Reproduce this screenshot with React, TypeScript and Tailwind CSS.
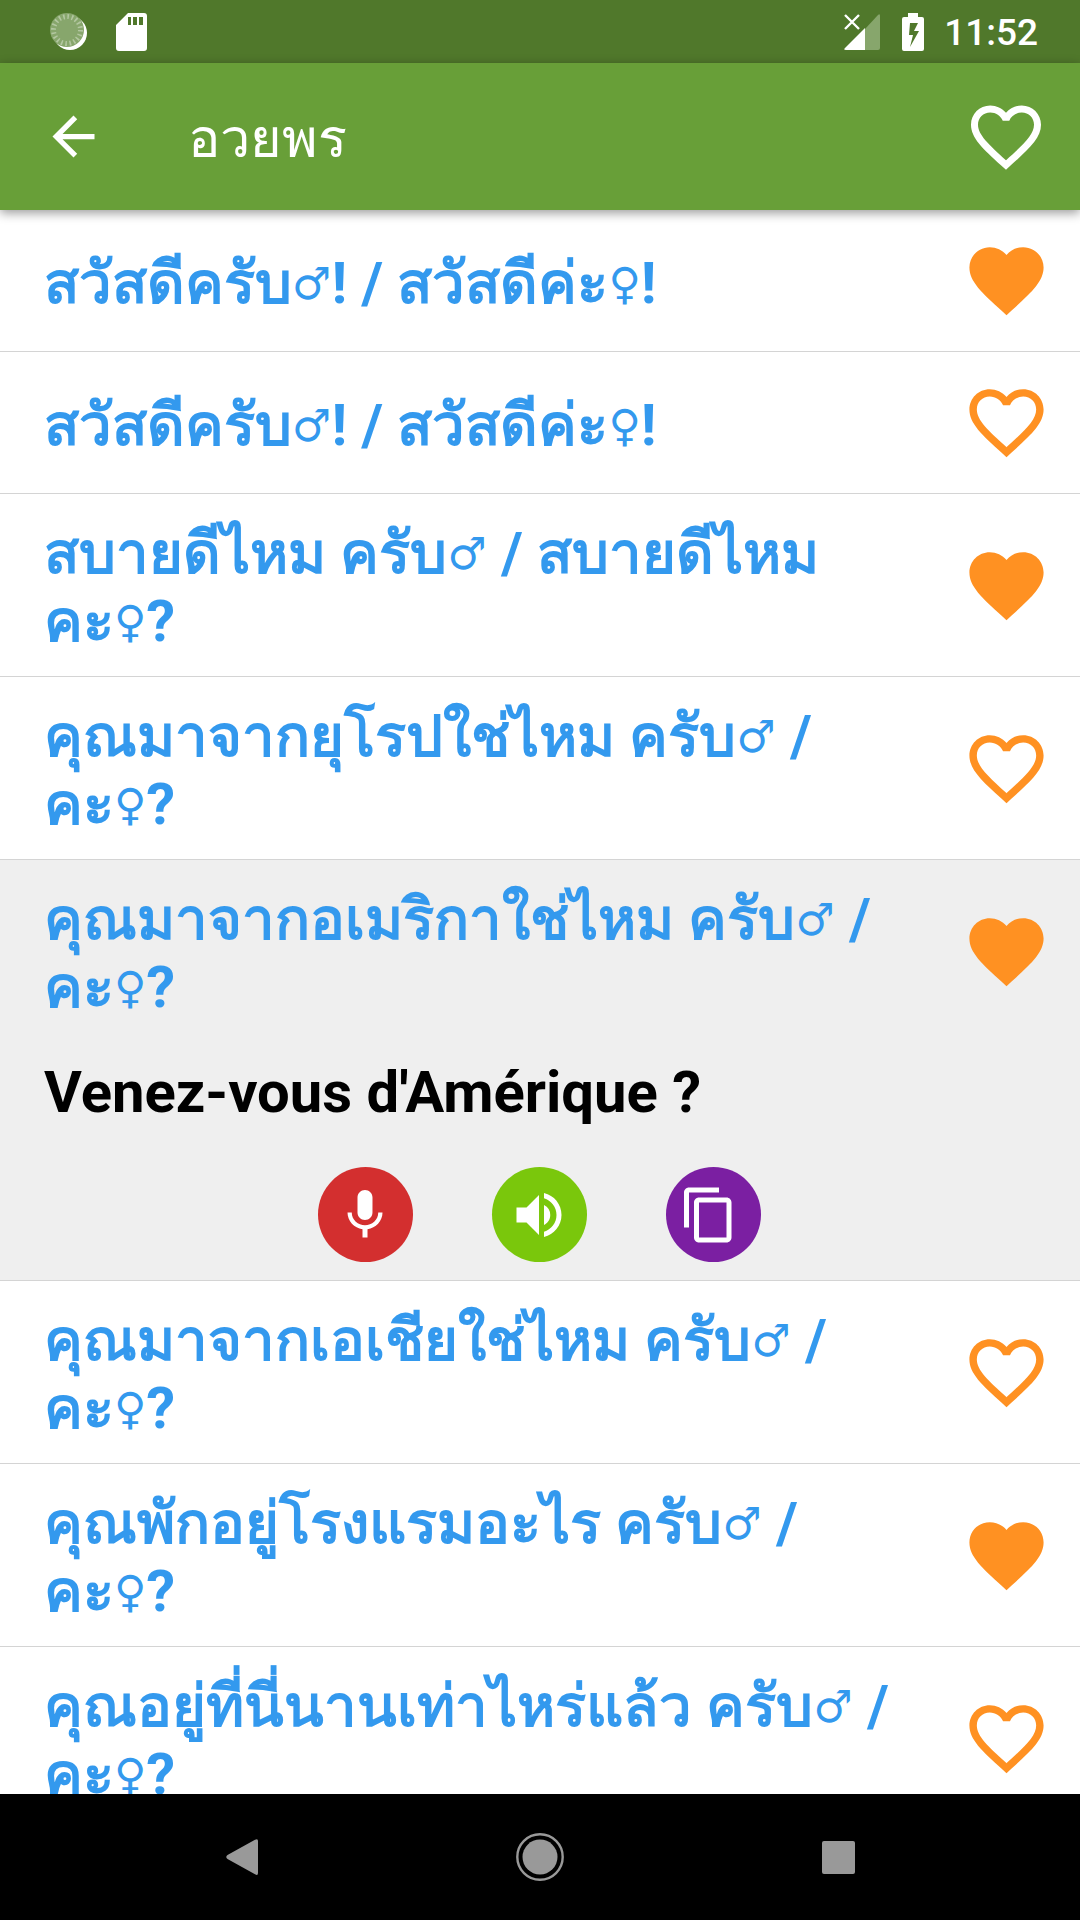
import { useState } from "react";
import {
  MdArrowBack,
  MdContentCopy,
  MdFavorite,
  MdFavoriteBorder,
  MdMic,
  MdVolumeUp,
} from "react-icons/md";

type Phrase = {
  text: string;
  translation: string;
  favorite: boolean;
};

const phrases: Phrase[] = [
  { text: "สวัสดีครับ♂! / สวัสดีค่ะ♀!", translation: "Bonjour !", favorite: true },
  { text: "สวัสดีครับ♂! / สวัสดีค่ะ♀!", translation: "Salut !", favorite: false },
  { text: "สบายดีไหม ครับ♂ / สบายดีไหม\nคะ♀?", translation: "Comment ça va ?", favorite: true },
  { text: "คุณมาจากยุโรปใช่ไหม ครับ♂ /\nคะ♀?", translation: "Venez-vous d'Europe ?", favorite: false },
  { text: "คุณมาจากอเมริกาใช่ไหม ครับ♂ /\nคะ♀?", translation: "Venez-vous d'Amérique ?", favorite: true },
  { text: "คุณมาจากเอเชียใช่ไหม ครับ♂ /\nคะ♀?", translation: "Venez-vous d'Asie ?", favorite: false },
  { text: "คุณพักอยู่โรงแรมอะไร ครับ♂ /\nคะ♀?", translation: "À quel hôtel êtes-vous ?", favorite: true },
  { text: "คุณอยู่ที่นี่นานเท่าไหร่แล้ว ครับ♂ /\nคะ♀?", translation: "Depuis quand êtes-vous ici ?", favorite: false },
];

function StatusBar() {
  return (
    <div className="flex h-[63px] shrink-0 items-center bg-[#50782b] pl-[50px] pr-[42px] text-white">
      <svg className="h-[38px] w-[38px]" viewBox="0 0 38 38">
        <circle cx="20" cy="20" r="17" fill="#fff" />
        <circle cx="17" cy="17" r="17" fill="#87a66c" />
        <circle cx="17" cy="17" r="13.5" fill="none" stroke="#b3c7a1" strokeWidth="5" strokeDasharray="1.6 2.64" />
      </svg>
      <svg className="ml-7 h-[38px] w-[31px]" viewBox="0 0 31 38">
        <path
          fill="currentColor"
          fillRule="evenodd"
          d="M12 0h16a3 3 0 0 1 3 3v32a3 3 0 0 1-3 3H3a3 3 0 0 1-3-3V12zM12 4v8h3V4zm5 0v8h4V4zm6 0v8h4V4z"
        />
      </svg>
      <div className="flex-1" />
      <svg className="h-9 w-9" viewBox="0 0 36 36">
        <path fill="#87a66c" d="M21 15 34 1q2-2 2 1v32q0 2-2 2H21z" />
        <path fill="currentColor" d="M1 34 21 14v22H2q-3 0-1-2z" />
        <path stroke="currentColor" strokeWidth="2.4" d="m1 1 14 14M15 1 1 15" />
      </svg>
      <svg className="ml-[22px] h-[38px] w-[22px]" viewBox="0 0 22 38">
        <path
          fill="currentColor"
          fillRule="evenodd"
          d="M6 0h10v4h4q2 0 2 2v30q0 2-2 2H2q-2 0-2-2V6q0-2 2-2h4zM8 10 7 22h4L8 34l9-16h-5l4-8z"
        />
      </svg>
      <span className="ml-5 pt-0.5 text-[37px] leading-[44px] font-medium">11:52</span>
    </div>
  );
}

// Gender signs need DejaVu at a smaller size, raised so they stand on the baseline
function PhraseText({ text }: { text: string }) {
  return (
    <>
      {text.split(/([♂♀])/).map((part, i) =>
        part === "♂" || part === "♀" ? (
          <span key={i} className="align-[4px] font-['DejaVu_Sans',sans-serif] text-[44px] leading-none">
            {part}
          </span>
        ) : (
          part
        )
      )}
    </>
  );
}

function NavBar() {
  return (
    <nav className="flex h-[126px] shrink-0 justify-center bg-black text-[#999]">
      <button aria-label="Back" className="flex w-[298px] items-center justify-center">
        <svg className="h-9 w-8" viewBox="0 0 32 36">
          <path fill="currentColor" d="M29 .8q3-1.8 3 1.2v32q0 3-3 1.2L1.5 20q-2.500-2 0-4z" />
        </svg>
      </button>
      <button aria-label="Home" className="flex w-[298px] items-center justify-center">
        <svg className="h-12 w-12" viewBox="0 0 48 48">
          <circle cx="24" cy="24" r="22.7" fill="none" stroke="currentColor" strokeWidth="2.4" />
          <circle cx="24" cy="24" r="17.5" fill="currentColor" />
        </svg>
      </button>
      <button aria-label="Recent apps" className="flex w-[298px] items-center justify-center">
        <span className="h-[33px] w-[33px] rounded-xs bg-[#999]" />
      </button>
    </nav>
  );
}

export default function App() {
  const [items, setItems] = useState(phrases);
  const [openIndex, setOpenIndex] = useState(4);

  const toggleFavorite = (index: number) => {
    setItems(items.map((p, i) => (i === index ? { ...p, favorite: !p.favorite } : p)));
  };

  return (
    <div className="flex h-screen flex-col bg-white font-['Roboto','Liberation_Sans',sans-serif]">
      <StatusBar />

      <header className="z-10 flex h-[147px] shrink-0 items-center bg-[#689f38] pr-8 pl-[42px] text-white shadow-[0_3px_10px_rgba(0,0,0,0.4)]">
        <button aria-label="Back">
          <MdArrowBack className="size-[63px]" />
        </button>
        <h1 className="ml-[83px] flex-1 pt-1 text-[54px] leading-[68px]">อวยพร</h1>
        <button aria-label="Favorites">
          <MdFavoriteBorder className="size-[84px]" />
        </button>
      </header>

      <ul className="min-h-0 flex-1 overflow-hidden">
        {items.map((p, i) => (
          <li
            key={i}
            className={`border-b border-[#d4d4d4] ${i === openIndex ? "bg-[#efefef]" : "bg-white"}`}
          >
            <div className="flex min-h-[141px] items-center gap-8 py-[21px] pr-[29px] pl-11">
              <button
                onClick={() => setOpenIndex(i)}
                className="flex-1 pt-1 text-left text-[58px] leading-[68px] font-bold whitespace-pre-line text-[#3399ee]"
              >
                <PhraseText text={p.text} />
              </button>
              <button aria-label="Toggle favorite" onClick={() => toggleFavorite(i)} className="text-[#ff9122]">
                {p.favorite ? (
                  <MdFavorite className="size-[89px]" />
                ) : (
                  <MdFavoriteBorder className="size-[89px]" />
                )}
              </button>
            </div>

            {i === openIndex && (
              <div className="pt-4 pr-[46px] pb-[18px] pl-11">
                <p className="text-[58px] leading-[68px] font-bold text-black">{p.translation}</p>
                <div className="mt-[41px] flex justify-center gap-[79px] text-white">
                  <button aria-label="Record" className="flex size-[95px] items-center justify-center rounded-full bg-[#d32f2f]">
                    <MdMic className="size-[60px]" />
                  </button>
                  <button aria-label="Listen" className="flex size-[95px] items-center justify-center rounded-full bg-[#7ac70c]">
                    <MdVolumeUp className="size-[60px]" />
                  </button>
                  <button aria-label="Copy" className="flex size-[95px] items-center justify-center rounded-full bg-[#7b1fa2] pr-2">
                    <MdContentCopy className="size-[60px]" />
                  </button>
                </div>
              </div>
            )}
          </li>
        ))}
      </ul>

      <NavBar />
    </div>
  );
}
